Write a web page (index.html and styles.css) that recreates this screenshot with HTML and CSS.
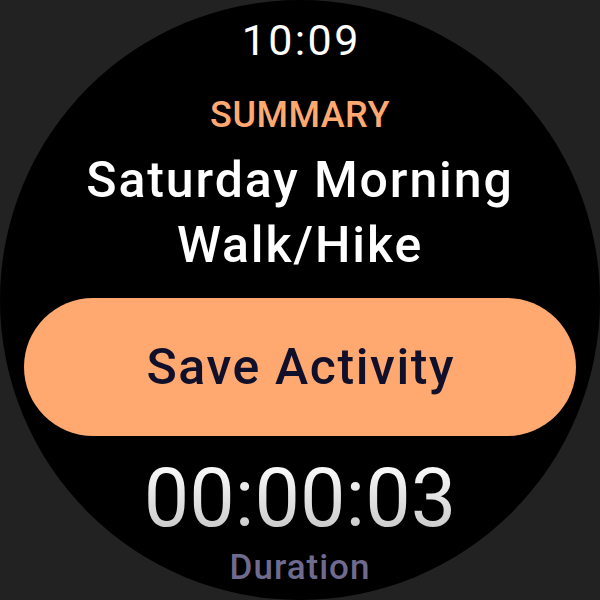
FILE: index.html
```html
<!DOCTYPE html>
<html>
<head>
<meta charset="utf-8">
<link rel="stylesheet" href="styles.css">
</head>
<body>
<div class="screen">
  <div class="watch">
    <div class="clock">10:09</div>
    <div class="eyebrow">SUMMARY</div>
    <div class="title">Saturday Morning<br>Walk/Hike</div>
    <button class="save">Save Activity</button>
    <div class="duration">00:00:03</div>
    <div class="duration-label">Duration</div>
  </div>
</div>
</body>
</html>
```
FILE: styles.css
```css
html, body {
  margin: 0;
  padding: 0;
  background: #222222;
}
.screen {
  width: 600px;
  height: 600px;
  background: #222222;
}
.watch {
  width: 600px;
  height: 600px;
  border-radius: 50%;
  background: #000000;
  overflow: hidden;
  display: flex;
  flex-direction: column;
  align-items: center;
  font-family: Roboto, "Liberation Sans", sans-serif;
  text-align: center;
}
.clock {
  margin-top: 15px;
  font-size: 43px;
  line-height: 50px;
  font-weight: 400;
  letter-spacing: 2.4px;
  padding-left: 2.4px;
  color: #ffffff;
}
.eyebrow {
  margin-top: 30px;
  font-size: 36px;
  line-height: 40px;
  font-weight: 500;
  letter-spacing: 0.5px;
  color: #ffa970;
}
.title {
  margin-top: 13px;
  font-size: 50px;
  line-height: 65px;
  font-weight: 500;
  letter-spacing: 1.9px;
  color: #ffffff;
}
.save {
  margin-top: 20px;
  width: 552px;
  height: 138px;
  border: none;
  border-radius: 69px;
  background: #ffa970;
  color: #10102a;
  font-family: Roboto, "Liberation Sans", sans-serif;
  font-size: 50px;
  font-weight: 500;
  letter-spacing: 1.6px;
  padding: 0 0 0 1.6px;
}
.duration {
  margin-top: 23px;
  font-size: 81px;
  line-height: 80px;
  font-weight: 400;
  background: linear-gradient(#ffffff, #c4c4c4);
  -webkit-background-clip: text;
  background-clip: text;
  color: transparent;
}
.duration-label {
  margin-top: 9px;
  font-size: 35px;
  line-height: 40px;
  font-weight: 500;
  letter-spacing: 1px;
  color: #6f6b8e;
}
```
